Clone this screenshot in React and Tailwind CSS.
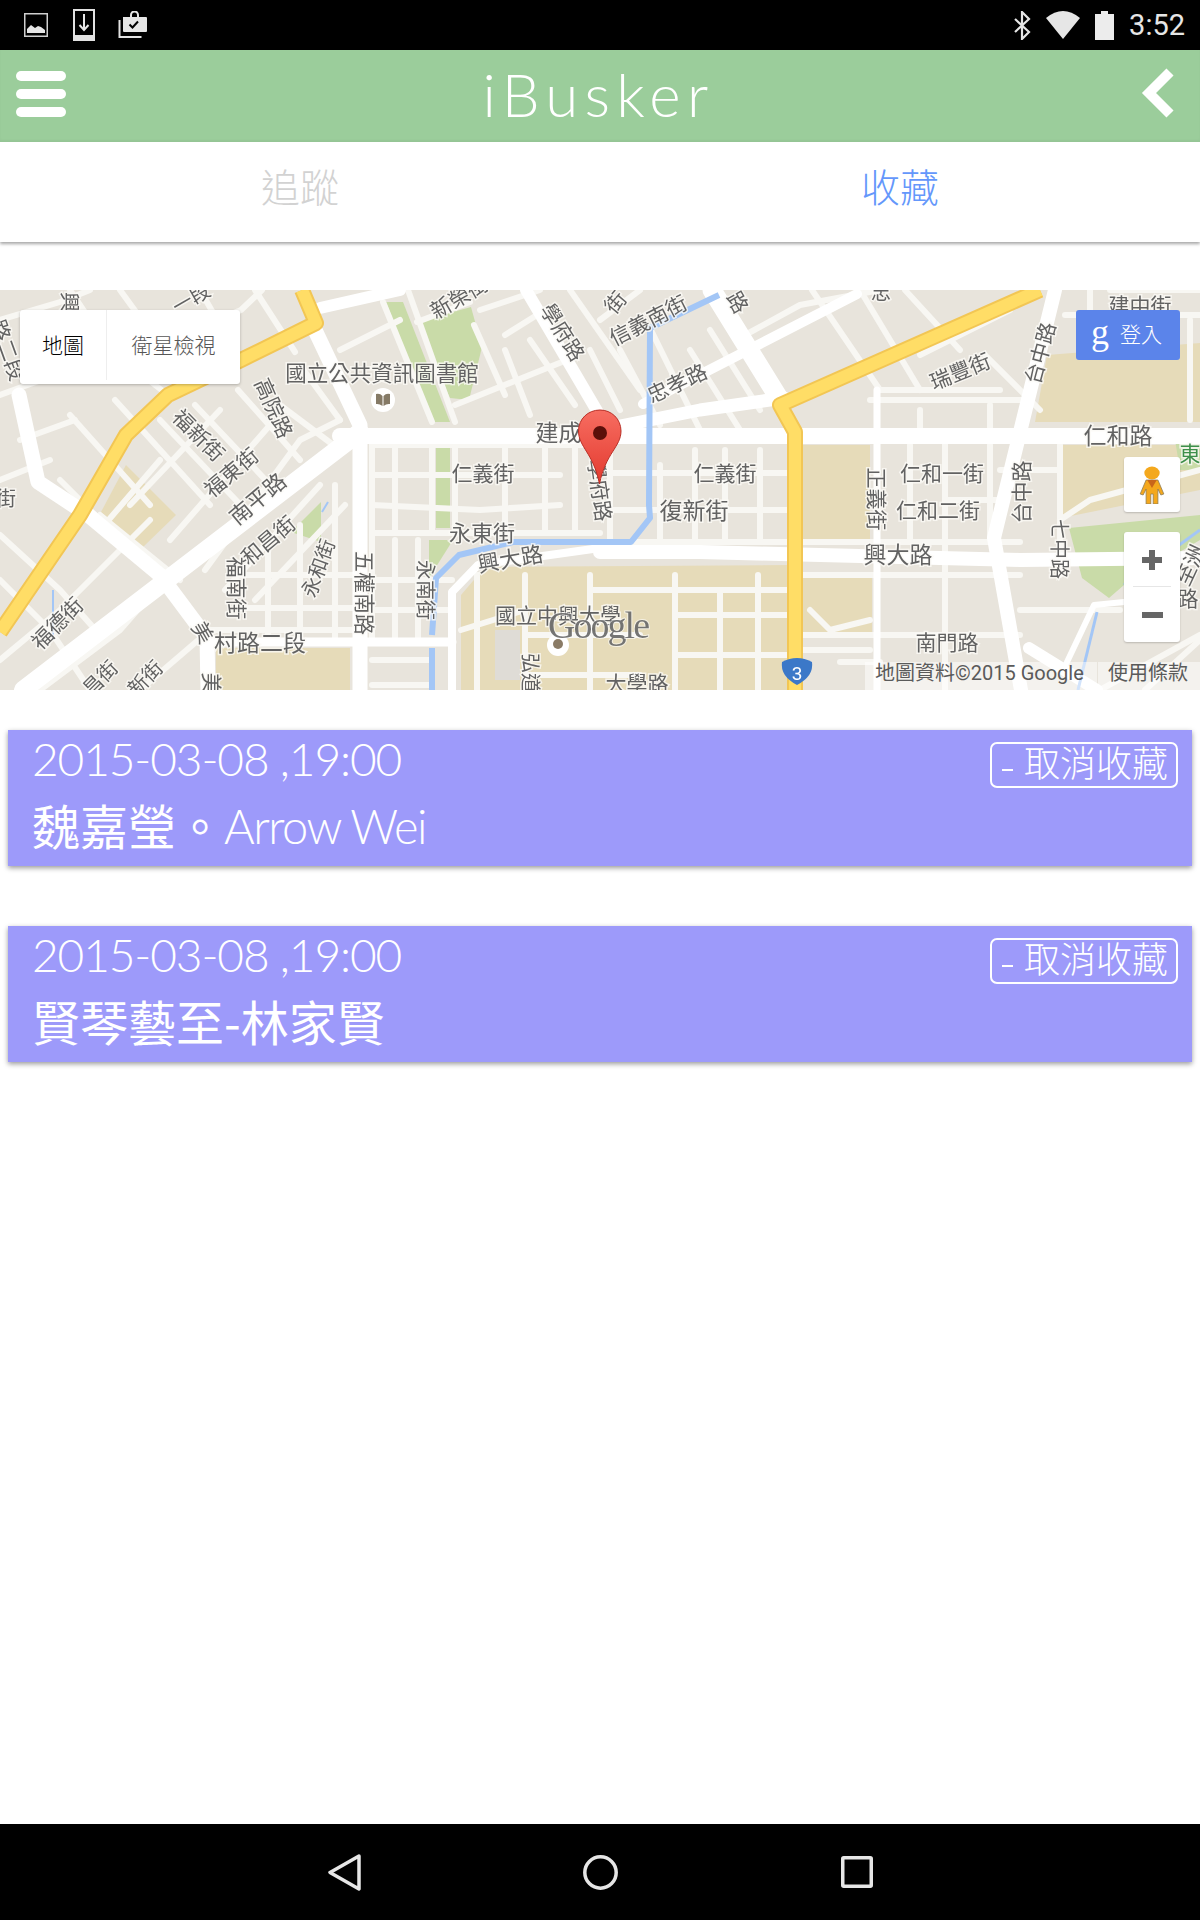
import React from "react";

const minor = [
  "0,105 55,85 168,50 241,20 262,0","70,0 110,60 168,105","200,0 240,70","255,0 295,62","120,0 160,55","0,30 60,12 90,0",
  "70,125 150,215","115,110 210,215","160,130 250,225","195,115 275,200","238,100 300,170","280,115 340,160","300,75 340,130",
  "100,240 160,170","130,215 220,120","170,250 270,135","205,280 300,150 340,130","225,300 320,195","255,310 345,215",
  "20,150 75,130","0,190 50,170","0,245 60,300 100,345","0,290 50,340 90,400","0,370 60,320 120,260 150,230","40,400 120,340 155,300","100,225 180,290","60,190 95,225",
  "240,285 360,285","240,318 360,318","268,262 268,350","300,235 300,350","335,195 335,350","210,340 360,340","140,400 210,340",
  "372,185 560,185","372,215 480,220 560,215","372,155 590,155","372,243 600,243","432,155 432,243","455,155 455,243","505,155 505,243","545,155 545,243","575,155 575,243","372,155 372,350","395,155 395,243",
  "372,290 452,290","372,320 452,320","395,250 395,350","418,250 418,350","372,370 432,370","372,395 432,395",
  "383,12 432,132","408,0 455,132","417,32 470,12","455,115 562,72","474,35 505,105","530,50 575,115","505,60 530,125","340,60 400,30",
  "480,20 540,0","545,20 505,45","590,60 620,120","570,0 640,100",
  "600,183 790,183","600,220 790,220","640,0 600,30","650,38 700,140","620,60 660,135","690,60 740,140","710,40 760,120","745,45 800,15 880,0","660,175 660,250","695,160 695,250","725,160 725,250","760,160 760,250","610,160 610,250",
  "600,252 1020,252","800,285 1020,285","800,345 1020,345","945,150 945,400","812,0 880,100","860,0 920,100","905,0 960,60","920,65 1010,20","880,100 1000,100","870,110 1030,110 ","985,65 1040,120","920,120 920,145","990,115 990,140",
  "1060,155 1060,285","1020,320 1120,320 ","1000,180 1060,180","945,210 1000,210","910,155 910,250","990,155 990,250",
  "810,320 830,340 870,330","800,360 870,360","840,372 880,372","477,285 477,400","525,285 525,400","525,320 461,340","590,285 590,400","590,300 790,300","525,345 640,345","525,385 640,385","675,285 675,400","675,325 790,325","675,365 790,365","720,300 720,400","758,285 758,400",
  "1090,0 1090,30","1065,25 1200,25","1110,0 1200,0","1190,30 1190,130","1200,180 1090,210 1060,230","1145,400 1200,350","1100,400 1200,345",
];

const major = [
  ["19,105 38,192 88,225 160,285 207,348 208,400", 15],
  ["360,142 23,400", 18],
  ["314,38 360,135 360,400", 15],
  ["340,146 1200,146", 16],
  ["320,18 400,0", 12],
  ["526,0 600,126", 12],
  ["712,0 780,110", 19],
  ["643,114 857,4", 10],
  ["600,140 700,120 784,108", 13],
  ["1055,0 1021,138 994,248 1021,400", 14],
  ["600,262 700,262 1020,270 1200,268", 14],
  ["452,400 452,302 478,275 600,258", 8],
  ["208,352 452,352", 9],
  ["1029,358 1097,400", 12],
  ["1067,372 1094,315 1124,312", 6],
  ["877,100 877,400", 7],
];

const labels = [
  ["國立公共資訊圖書館",382,82,0,21.5],["高院路",274,118,66,21],["福新街",199,145,45,21],["福東街",231,182,-40,21],["南平路",257,208,-40,22],
  ["和昌街",268,250,-40,21],["福南街",237,298,90,21],["永和街",318,278,-70,20],["五權南路",365,303,90,21],["永南街",425,300,90,20],
  ["福德街",57,333,-45,21],["村路二段",260,352,0,23],["美",203,342,60,21],["美",212,393,90,21],["仁義街",483,183,0,21],["永東街",482,242,0,22],
  ["興大路",510,268,-10,22],["國立中興大學",558,325,0,21],["弘道",530,383,90,20],["大學路",637,393,0,21],["建成路",570,142,0,23],
  ["學府路",563,42,58,21],["新榮街",459,7,-30,21],["學府路",600,200,82,21],["仁義街",725,183,0,21],["復新街",694,220,0,23],
  ["信義南街",648,30,-27,21],["忠孝路",677,93,-25,21],["瑞豐街",960,81,-22,21],["台中路",1040,63,-75,21],["建中街",1140,15,0,21],
  ["仁和路",1118,145,0,23],["仁和一街",942,183,0,21],["仁和二街",938,220,0,21],["正義街",877,209,90,21],["台中路",1021,202,-90,21],
  ["七中路",1059,259,90,20],["興大路",898,264,0,23],["南門路",947,352,0,21],["至洲",1190,275,-65,21],["路",1188,308,0,21],
  ["興",69,12,90,20],["一段",191,8,-30,20],["路二段",8,60,70,21],["街",6,208,0,20],["新街",145,388,-45,20],["昌街",100,388,-45,20],
  ["路",738,12,60,21],["街",615,12,-50,21],["忠",881,2,0,20],
];

function MapArt() {
  return (
    <svg width="1200" height="400" viewBox="0 0 1200 400" className="block blur-[0.4px] font-['Noto_Sans_CJK_TC','Noto_Sans',sans-serif]">
      <defs>
        <linearGradient id="pin" x1="0" y1="0" x2="0" y2="1">
          <stop offset="0" stopColor="#f76d61" />
          <stop offset="1" stopColor="#e33a2f" />
        </linearGradient>
      </defs>
      <rect width="1200" height="400" fill="#e8e4dc" />
      <g fill="#e6dbb9">
        <polygon points="126,175 176,225 142,258 101,222" />
        <polygon points="461,305 485,277 790,275 790,400 461,400" />
        <rect x="216" y="358" width="134" height="42" />
        <rect x="803" y="155" width="67" height="97" />
        <rect x="803" y="285" width="69" height="60" />
        <polygon points="1047,65 1200,53 1200,132 1035,132" />
        <polygon points="1061,155 1200,155 1200,200 1061,228" />
      </g>
      <rect x="495" y="340" width="25" height="50" fill="#dfdcd6" />
      <g fill="#c9dba8">
        <polygon points="386,12 403,12 450,132 432,132" />
        <polygon points="417,32 471,17 482,57 469,110 450,108 438,82" />
        <rect x="436" y="155" width="14" height="83" />
        <polygon points="291,242 321,212 321,252" />
        <polygon points="429,250 453,250 429,288" />
        <polygon points="1069,238 1200,225 1200,250 1124,295 1109,308 1082,288" />
        <polygon points="1175,150 1200,150 1200,180 1180,180" />
      </g>
      <g fill="none" strokeLinejoin="round" strokeLinecap="round">
        {minor.map((p, i) => <polyline key={i} points={p} stroke="#f8f7f3" strokeWidth="6" />)}
        {major.map(([p, w], i) => <polyline key={i} points={p} stroke="#ffffff" strokeWidth={w} />)}
      </g>
      <g fill="none" stroke="#a3c6f6" strokeLinejoin="round">
        <polyline points="719,5 650,38 649,215 650,228 631,252 513,252 459,265 436,288 432,345" strokeWidth="6" />
        <polyline points="432,358 432,400" strokeWidth="6" />
        <polyline points="1097,322 1078,400" strokeWidth="3" />
        <polyline points="1200,240 1124,295" strokeWidth="3" />
        <polyline points="53,300 53,350" strokeWidth="2" />
        <polyline points="328,212 322,222" strokeWidth="2" />
      </g>
      <g fill="none" strokeLinejoin="round">
        <polyline points="302,0 316,33 241,70 168,105 126,145 80,225 0,342" stroke="#f2c654" strokeWidth="16" />
        <polyline points="302,0 316,33 241,70 168,105 126,145 80,225 0,342" stroke="#ffdd66" strokeWidth="12" />
        <polyline points="1040,0 780,115 795,142 795,400" stroke="#f2c654" strokeWidth="16" />
        <polyline points="1040,0 780,115 795,142 795,400" stroke="#ffdd66" strokeWidth="12" />
      </g>
      <circle cx="383" cy="110" r="12" fill="#fff" />
      <path d="M376 104 q4 -1 6.500 2 v10 q-3 -2.500 -6.500 -2 z M390 104 q-4 -1 -6.500 2 v10 q3 -2.500 6.500 -2 z" fill="#857a66" />
      <g textAnchor="middle" dominantBaseline="central" fill="#626262" stroke="#fbfaf6" strokeOpacity="0.8" strokeWidth="3" paintOrder="stroke">
        {labels.map(([t, x, y, r, s], i) => (
          <text key={i} x={x} y={y - 1} fontSize={s} transform={`rotate(${r} ${x} ${y})`}>{t}</text>
        ))}
        <text x="1190" y="162" fontSize="21" fill="#3d8f4a">東</text>
      </g>
      <circle cx="558" cy="355" r="11" fill="#fff" />
      <circle cx="558" cy="354" r="5" fill="#8a7b66" />
      <text x="548" y="348" fontSize="38" fontFamily="'Liberation Serif',serif" fill="#666" fillOpacity="0.9" stroke="#fff" strokeOpacity="0.6" strokeWidth="2" paintOrder="stroke" textLength="102">Google</text>
      <path d="M600 120 c-12 0 -21.500 9 -21.500 21 c0 16 15 22 21 53 c6 -31 21.500 -37 21.500 -53 c0 -12 -9.500 -21 -21 -21 z" fill="url(#pin)" stroke="#b93027" strokeWidth="1" />
      <circle cx="600" cy="143" r="7" fill="#5b0f0a" />
      <path d="M782 372 q15 -8 30 0 q2 14 -15 23 q-17 -9 -15 -23 z" fill="#3b78c8" />
      <text x="797" y="390" fontSize="19" textAnchor="middle" fill="#fff" fontFamily="Roboto,sans-serif">3</text>
    </svg>
  );
}

function Card({ cjk, latin }) {
  return (
    <div className="h-[136px] mx-[8px] bg-[#9d9afa] shadow-[0_2px_5px_rgba(0,0,0,0.4)] pl-[24px] pr-[14px] pt-[12px] text-white flex justify-between items-start">
      <div className="-mt-[6px]">
        <div className="text-[46px] leading-[46px] tracking-[-1.100px] whitespace-nowrap font-['Lato',sans-serif] font-light">2015-03-08 ,19:00</div>
        <div className="h-[68px] flex items-center whitespace-nowrap mt-[8px]">
          <span className="text-[48px] leading-none font-['Noto_Sans_CJK_TC',sans-serif]">{cjk}</span>
          {latin && <span className="text-[47px] leading-none tracking-[-1.500px] mt-[4px] font-['Lato',sans-serif] font-light">{latin}</span>}
        </div>
      </div>
      <div className="w-[188px] h-[46px] border-2 border-white rounded-[7px] flex items-center pl-[10px] text-[36px] font-['Noto_Sans_CJK_TC',sans-serif] font-light whitespace-nowrap">
        <div className="w-[11px] h-[2px] bg-white mr-[11px] mt-[10px]" />
        <span className="leading-none -mt-[9px]">取消收藏</span>
      </div>
    </div>
  );
}

export default function App() {
  return (
    <div className="h-[1920px] w-[1200px] bg-white flex flex-col overflow-hidden font-['Noto_Sans_CJK_TC','Noto_Sans',sans-serif]">
      <div className="h-[50px] bg-black flex items-center shrink-0 text-[#e6e6e6]">
        <svg width="24" height="24" viewBox="0 0 24 24" className="ml-[24px]">
          <rect x="0.750" y="0.750" width="22.500" height="22.500" fill="none" stroke="#cfcfcf" strokeWidth="1.500" />
          <path d="M3 20 v-4 l4 -4 l4 3 l3 -2 l3 1 l4 3 v3 z" fill="#e6e6e6" />
        </svg>
        <svg width="22" height="32" viewBox="0 0 22 32" className="ml-[25px]">
          <path d="M1 1 h20 v30 h-20 z" fill="none" stroke="#e2e2e2" strokeWidth="2" />
          <rect x="0" y="26" width="22" height="6" fill="#e2e2e2" />
          <path d="M11 5 v15 M6.500 16 l4.500 5 l4.500 -5" fill="none" stroke="#e6e6e6" strokeWidth="2" />
        </svg>
        <svg width="29" height="28" viewBox="0 0 29 28" className="ml-[23px]">
          <path d="M1.500 9 v17 h22" fill="none" stroke="#e2e2e2" strokeWidth="2" />
          <path d="M5 6 h23 a1 1 0 0 1 1 1 v13 a1 1 0 0 1 -1 1 h-22 a1 1 0 0 1 -1 -1 z" fill="#e6e6e6" />
          <path d="M13 6 v-2 a3.500 3.500 0 0 1 7 0 v2" fill="none" stroke="#e6e6e6" strokeWidth="2" />
          <path d="M11.500 13.500 l3 3 l5.500 -6" fill="none" stroke="#000" strokeWidth="2" />
        </svg>
        <svg width="19" height="29" viewBox="0 0 19 29" className="ml-auto">
          <path d="M2 8 l14 13 l-7 7 v-27 l7 7 l-14 13" fill="none" stroke="#e6e6e6" strokeWidth="2.200" />
        </svg>
        <svg width="34" height="28" viewBox="0 0 34 28" className="ml-[14px]">
          <path d="M0 7 q17 -14 34 0 l-17 21 z" fill="#e6e6e6" />
        </svg>
        <svg width="19" height="29" viewBox="0 0 19 29" className="ml-[15px]">
          <path d="M6 0 h7 v3 h6 v26 h-19 v-26 h6 z" fill="#ececec" />
        </svg>
        <span className="ml-[15px] mr-[15px] text-[29px] leading-none font-['Roboto',sans-serif]">3:52</span>
      </div>

      <div className="relative h-[92px] bg-[#9bcd9b] shrink-0 flex items-center justify-between pl-[16px] pr-[26px] shadow-[inset_0_-2px_2px_rgba(0,0,0,0.04)]">
        <div className="w-[50px] flex flex-col gap-[8px] -mt-[4px]">
          <div className="h-[10px] rounded-full bg-white" />
          <div className="h-[10px] rounded-full bg-white" />
          <div className="h-[10px] rounded-full bg-white" />
        </div>
        <div className="text-white text-[60px] leading-none font-light font-['Lato',sans-serif] tracking-[6.300px] whitespace-nowrap -mt-[4px] mr-[10px]">iBusker</div>
        <svg width="33" height="50" viewBox="0 0 33 50" className="-mt-[6px]">
          <path d="M29 4 L8 25 L29 46" fill="none" stroke="#fff" strokeWidth="10" />
        </svg>
      </div>

      <div className="h-[100px] shrink-0 flex bg-white shadow-[0_2px_3px_rgba(0,0,0,0.35)] text-[39px] font-light pb-[14px]">
        <div className="flex-1 flex items-center justify-center text-[#d2d2d2]">追蹤</div>
        <div className="flex-1 flex items-center justify-center text-[#6497fb]">收藏</div>
      </div>

      <div className="flex-1 pt-[48px] flex flex-col">
        <div className="relative h-[400px] overflow-hidden shrink-0">
          <MapArt />
          <div className="absolute left-[20px] top-[20px] w-[220px] h-[74px] bg-white rounded-[3px] shadow-[0_1px_3px_rgba(0,0,0,0.25)] flex text-[21px] font-light pb-[4px]">
            <div className="w-[87px] flex items-center justify-center text-black border-r border-[#eeeeee]">地圖</div>
            <div className="flex-1 flex items-center justify-center text-[#565656]">衛星檢視</div>
          </div>
          <div className="absolute left-[1076px] top-[20px] w-[104px] h-[50px] bg-[#5b84ea] rounded-[3px] flex items-center text-white">
            <span className="ml-[15px] text-[36px] leading-none font-['Liberation_Serif',serif] -mt-[6px]">g</span>
            <span className="ml-[11px] text-[21px] leading-none font-light -mt-[4px]">登入</span>
          </div>
          <div className="absolute left-[1124px] top-[167px] w-[56px] h-[55px] bg-white rounded-[3px] shadow-[0_1px_2px_rgba(0,0,0,0.2)] flex items-center justify-center">
            <svg width="26" height="38" viewBox="0 0 22 38" preserveAspectRatio="none">
              <circle cx="11" cy="7" r="6.500" fill="#f4a81d" />
              <path d="M6 14 h10 l5 14 l-2.500 1 l-2.500 -6 v15 h-4 v-10 h-2 v10 h-4 v-15 l-2.500 6 l-2.500 -1 z" fill="#f4a81d" stroke="#8a7a55" strokeWidth="0.700" />
              <path d="M7 14 h8 l-4 8 z" fill="#c9661a" />
            </svg>
          </div>
          <div className="absolute left-[1124px] top-[242px] w-[56px] h-[110px] bg-white rounded-[3px] shadow-[0_1px_2px_rgba(0,0,0,0.2)] flex flex-col items-center">
            <svg width="22" height="22" viewBox="0 0 22 22" className="mt-[17px]">
              <path d="M11 1 v20 M1 11 h20" stroke="#666" strokeWidth="6" />
            </svg>
            <div className="w-[38px] h-px bg-[#e6e6e6] mt-[15px]" />
            <div className="w-[21px] h-[6px] bg-[#666] mt-[25px]" />
          </div>
          <div className="absolute right-0 bottom-0 h-[28px] w-[335px] flex items-center text-[20px] leading-none text-[#5a5a5a] font-['Roboto','Noto_Sans_CJK_TC',sans-serif]">
            <div className="h-full w-[232px] bg-white/50 pl-[10px] pb-[6px] flex items-center whitespace-nowrap">地圖資料©2015 Google</div>
            <div className="h-full flex-1 ml-px bg-white/50 pl-[10px] pb-[6px] flex items-center whitespace-nowrap">使用條款</div>
          </div>
        </div>

        <div className="mt-[40px] flex flex-col gap-[60px]">
          <Card cjk="魏嘉瑩。" latin="Arrow Wei" />
          <Card cjk="賢琴藝至-林家賢" />
        </div>
      </div>

      <div className="h-[96px] bg-black shrink-0 relative flex items-center justify-center">
        <div className="w-[545px] flex items-center justify-between">
          <svg width="33" height="37" viewBox="0 0 33 37">
            <path d="M31 2 L2 18.500 L31 35 Z" fill="none" stroke="#e6e6e6" strokeWidth="3.500" strokeLinejoin="round" />
          </svg>
          <svg width="35" height="35" viewBox="0 0 35 35">
            <circle cx="17.500" cy="17.500" r="15.700" fill="none" stroke="#e6e6e6" strokeWidth="3.500" />
          </svg>
          <svg width="32" height="32" viewBox="0 0 32 32">
            <rect x="1.750" y="1.750" width="28.500" height="28.500" rx="1" fill="none" stroke="#e6e6e6" strokeWidth="3.500" />
          </svg>
        </div>
      </div>
    </div>
  );
}
